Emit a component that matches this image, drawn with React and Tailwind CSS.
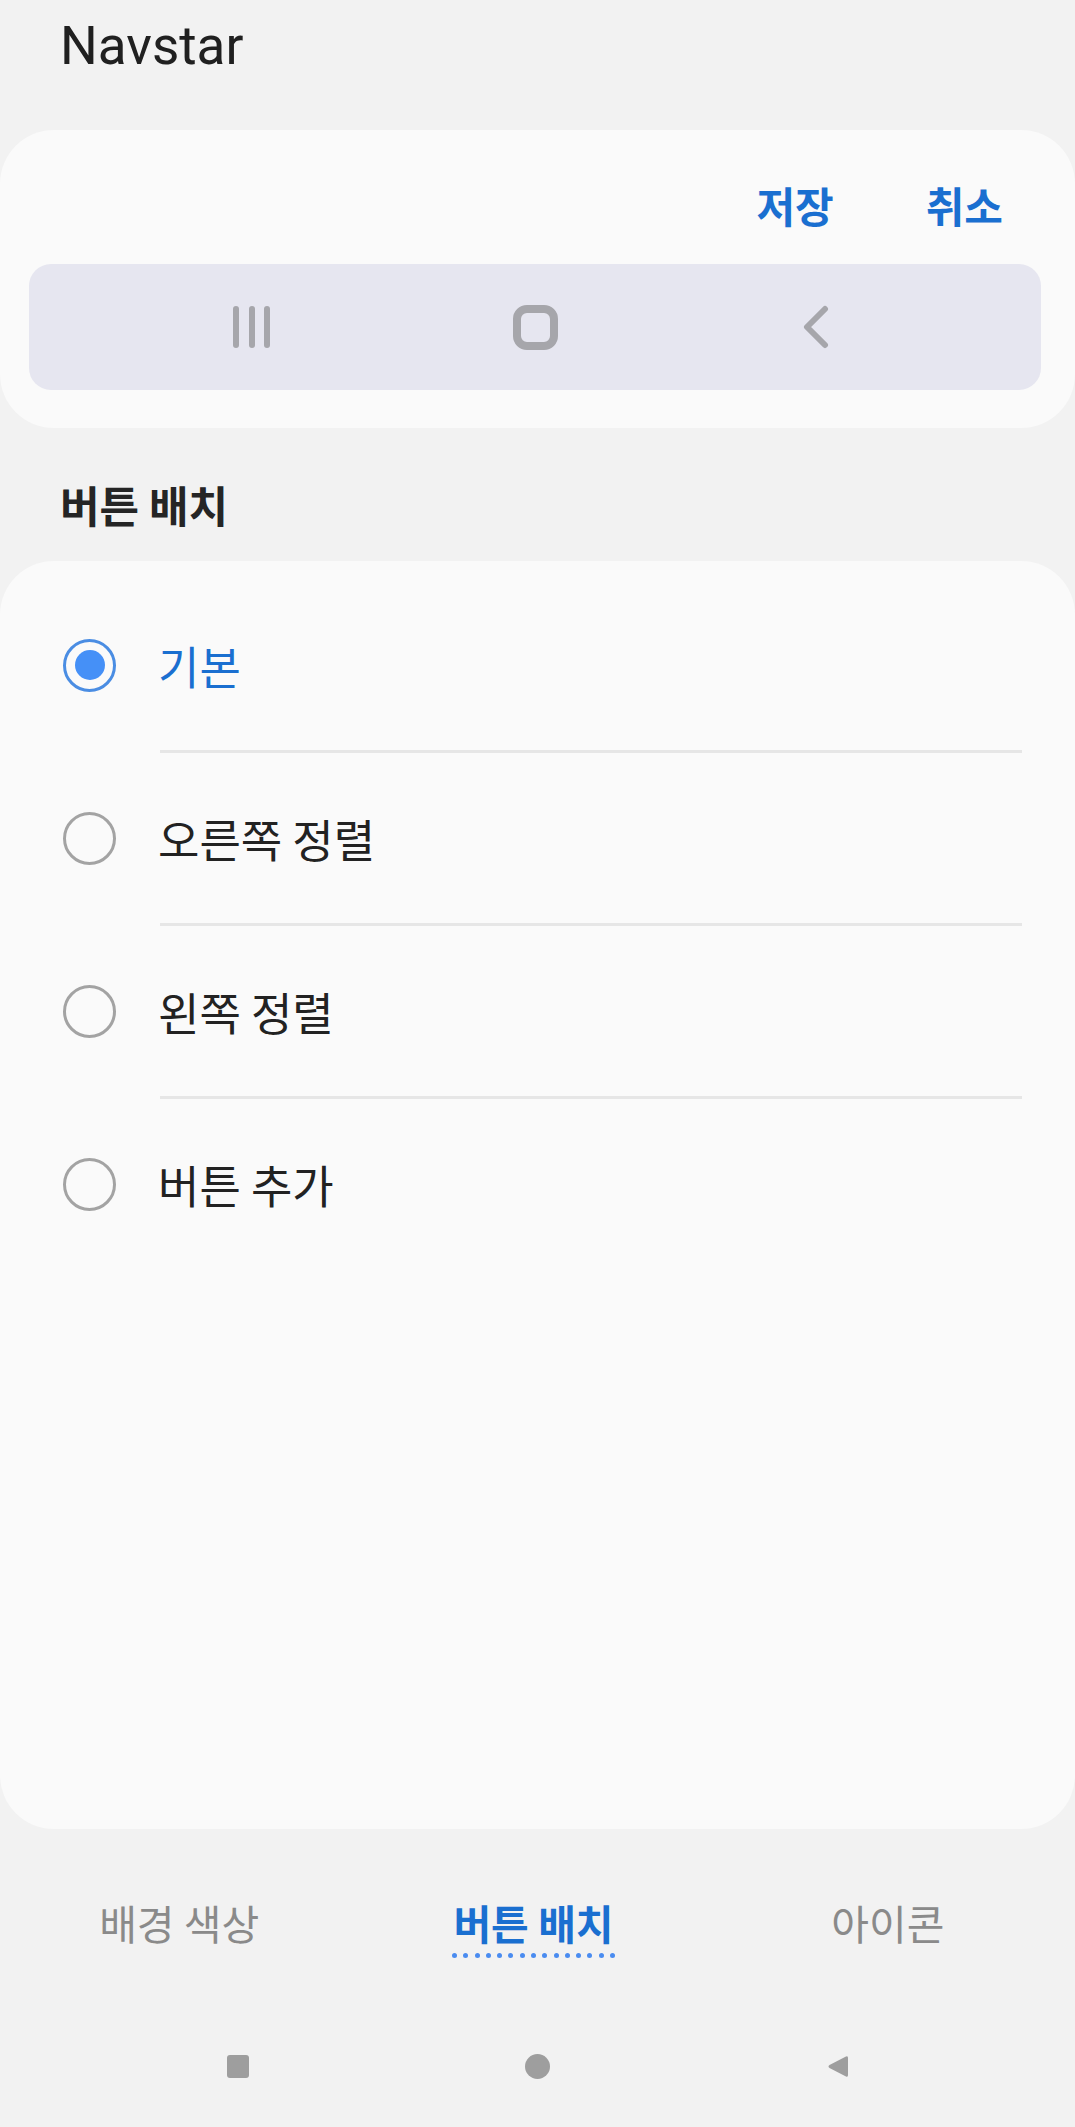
import React, { useState } from 'react';

const OPTIONS = ['기본', '오른쪽 정렬', '왼쪽 정렬', '버튼 추가'];
const TABS = ['배경 색상', '버튼 배치', '아이콘'];

const kr = { fontFamily: '"Noto Sans CJK KR", "Noto Sans", sans-serif' };

function Radio({ checked }) {
  if (checked) {
    return (
      <div className="w-[53px] h-[53px] rounded-full border-[3px] border-[#4a8de3] flex items-center justify-center shrink-0">
        <div className="w-[30px] h-[30px] rounded-full bg-[#4590f7]" />
      </div>
    );
  }
  return <div className="w-[53px] h-[53px] rounded-full border-[3px] border-[#a3a3a3] shrink-0" />;
}

function NavPreview() {
  return (
    <div className="ml-[29px] mr-[34px] h-[126px] rounded-[22px] bg-[#e6e6f0] flex items-center justify-center">
      {/* recents */}
      <div className="w-[283px] flex justify-center">
        <svg width="40" height="44" viewBox="0 0 40 44">
          <g stroke="#a6a6ab" strokeWidth="6" strokeLinecap="round">
            <line x1="4" y1="4" x2="4" y2="40" />
            <line x1="20" y1="4" x2="20" y2="40" />
            <line x1="35" y1="4" x2="35" y2="40" />
          </g>
        </svg>
      </div>
      {/* home */}
      <div className="w-[283px] flex justify-center">
        <div className="w-[45px] h-[45px] rounded-[14px] border-[8px] border-[#a6a6ab]" />
      </div>
      {/* back */}
      <div className="w-[283px] flex justify-center">
        <svg width="30" height="44" viewBox="0 0 30 44">
          <polyline points="22,4 4,22 22,40" fill="none" stroke="#a6a6ab" strokeWidth="6" strokeLinecap="round" strokeLinejoin="round" />
        </svg>
      </div>
    </div>
  );
}

export default function App() {
  const [selected, setSelected] = useState(0);
  const [tab, setTab] = useState(1);

  return (
    <div className="w-[1075px] h-[2127px] bg-[#f2f2f2] overflow-hidden flex flex-col" style={kr}>
      {/* App title */}
      <div
        className="pl-[60px] pt-[20px] text-[53px] leading-[52px] text-[#202020]"
        style={{ fontFamily: 'Roboto, "Noto Sans", sans-serif' }}
      >
        Navstar
      </div>

      {/* Preview card */}
      <div className="mt-[58px] bg-[#fafafa] rounded-[54px] pt-[54px] pb-[38px]">
        <div className="flex justify-end pr-[72px] gap-[92px] text-[42px] leading-[42px] font-bold text-[#1a6fd0]">
          <button>저장</button>
          <button>취소</button>
        </div>
        <div className="mt-[38px]">
          <NavPreview />
        </div>
      </div>

      {/* Section title */}
      <div className="mt-[55px] pl-[60px] text-[43px] leading-[43px] font-bold text-[#252525]">버튼 배치</div>

      {/* Options card */}
      <div className="mt-[35px] h-[1268px] bg-[#fafafa] rounded-[54px] pt-[19px]">
        {OPTIONS.map((label, i) => (
          <div key={label}>
            {i > 0 && <div className="ml-[160px] mr-[53px] h-[3px] bg-[#e6e6e6]" />}
            <div
              className="h-[170px] flex items-center pl-[63px] cursor-pointer"
              onClick={() => setSelected(i)}
            >
              <Radio checked={selected === i} />
              <span
                className={
                  'ml-[42px] text-[45px] leading-[45px] ' +
                  (selected === i ? 'text-[#1a6fd0]' : 'text-[#222222]')
                }
              >
                {label}
              </span>
            </div>
          </div>
        ))}
      </div>

      {/* Tabs */}
      <div className="mt-[73px] grid grid-cols-3 pl-[2px] pr-[10px]">
        {TABS.map((t, i) => (
          <button key={t} onClick={() => setTab(i)} className="flex flex-col items-center">
            <span
              className={
                'text-[41px] leading-[41px] ' +
                (tab === i ? 'font-bold text-[#1a6fd0]' : 'text-[#8a8a8a]')
              }
            >
              {t}
            </span>
            <div className={'mt-[10px] w-[163px] h-[5px] flex justify-between ' + (tab === i ? '' : 'invisible')}>
              {Array.from({ length: 15 }).map((_, k) => (
                <span key={k} className="w-[5px] h-[5px] rounded-full bg-[#4a8cf0]" />
              ))}
            </div>
          </button>
        ))}
      </div>

      {/* System nav bar */}
      <div className="mt-[47px] h-[122px] flex items-center justify-center">
        <div className="w-[300px] flex justify-center">
          <div className="w-[22px] h-[23px] rounded-[3px] bg-[#9e9e9e]" />
        </div>
        <div className="w-[300px] flex justify-center">
          <div className="w-[25px] h-[25px] rounded-full bg-[#9e9e9e]" />
        </div>
        <div className="w-[300px] flex justify-center">
          <svg width="22" height="23" viewBox="0 0 22 23">
            <path d="M19 1.5 Q21 0.5 21 3 L21 20 Q21 22.5 19 21.5 L2.5 13 Q0.5 11.5 2.5 10 Z" fill="#9e9e9e" />
          </svg>
        </div>
      </div>
    </div>
  );
}
